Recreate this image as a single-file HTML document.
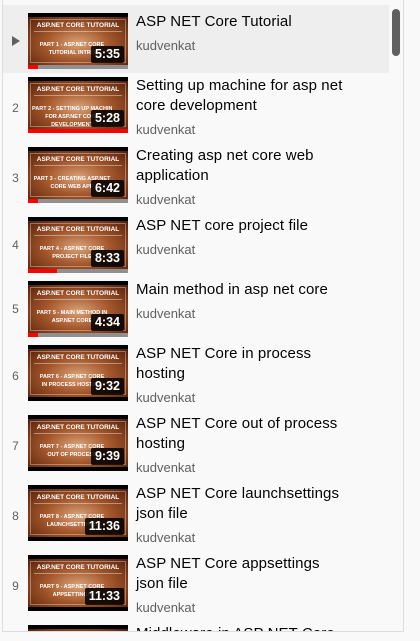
<!DOCTYPE html>
<html><head><meta charset="utf-8"><style>
*{margin:0;padding:0;box-sizing:border-box}
html,body{width:420px;height:641px;background:#f9f9f9;overflow:hidden;font-family:"Liberation Sans",Arial,sans-serif}
.box{position:absolute;left:2px;top:-2px;width:402px;height:634px;border:1px solid #ddd;border-top:none;overflow:hidden;background:#f9f9f9}
.list{position:absolute;left:0;top:7px;width:386px}
.row{display:flex;padding:4px 0 4px 0;position:relative;align-items:flex-start}
.row.first{background:#eee;padding-top:8px}
.idx{width:25px;text-align:center;font-size:12px;color:#606060;align-self:center}
.thumb{width:100px;height:56px;background:#000;position:relative;flex:none}
.img{position:absolute;left:0;top:4px;width:100px;height:48px;background:radial-gradient(ellipse at 50% 55%,#d9a27a 0%,#a5582c 45%,#6b2e12 85%,#4a1d0a 100%);overflow:hidden}
.img:after{content:"";position:absolute;left:2px;top:2px;right:2px;bottom:2px;border:1px solid rgba(255,255,255,.35)}
.t1{position:absolute;left:0;right:0;top:5px;text-align:center;color:#fff;font-size:6.5px;font-weight:bold;white-space:nowrap}
.t0{position:absolute;left:6px;right:6px;top:14px;height:1px;background:rgba(255,255,255,.4)}
.t2{position:absolute;left:4px;top:24px;color:#fff;font-size:5.5px;font-weight:bold;line-height:8px;text-align:center;width:80px;white-space:nowrap;overflow:hidden}
.dur{position:absolute;right:4px;bottom:6px;background:rgba(0,0,0,.85);color:#fff;font-size:12.5px;font-weight:bold;padding:1px 4px;border-radius:2px;line-height:15px}
.prog{position:absolute;left:0;bottom:0;width:100px;height:4px;background:#909090}
.prog i{display:block;height:4px;background:#f00}
.txt{margin-left:8px;margin-top:-1px;width:228px}
.title{font-size:15px;line-height:20px;color:#030303;letter-spacing:.1px}
.ch{font-size:13px;line-height:18px;color:#606060;margin-top:5px}
.sb{position:absolute;left:389px;top:11px;width:8px;height:47px;background:#606060;border-radius:4px}
.play{width:0;height:0;border-left:8px solid #606060;border-top:5px solid transparent;border-bottom:5px solid transparent;margin-left:9px}
</style></head><body>
<div class="box"><div class="list">
<div class="row first"><div class="idx"><div class="play"></div></div><div class="thumb"><div class="img"><div class="t1">ASP.NET CORE TUTORIAL</div><div class="t0"></div><div class="t2">PART 1 - ASP.NET CORE<br>TUTORIAL INTRO</div></div><div class="dur">5:35</div><div class="prog"><i style="width:10px"></i></div></div><div class="txt"><div class="title">ASP NET Core Tutorial</div><div class="ch">kudvenkat</div></div></div>
<div class="row"><div class="idx">2</div><div class="thumb"><div class="img"><div class="t1">ASP.NET CORE TUTORIAL</div><div class="t0"></div><div class="t2">PART 2 - SETTING UP MACHINE<br>FOR ASP.NET CORE<br>DEVELOPMENT</div></div><div class="dur">5:28</div><div class="prog"><i style="width:100px"></i></div></div><div class="txt"><div class="title">Setting up machine for asp net core development</div><div class="ch">kudvenkat</div></div></div>
<div class="row"><div class="idx">3</div><div class="thumb"><div class="img"><div class="t1">ASP.NET CORE TUTORIAL</div><div class="t0"></div><div class="t2">PART 3 - CREATING ASP.NET<br>CORE WEB APP</div></div><div class="dur">6:42</div><div class="prog"><i style="width:10px"></i></div></div><div class="txt"><div class="title">Creating asp net core web application</div><div class="ch">kudvenkat</div></div></div>
<div class="row"><div class="idx">4</div><div class="thumb"><div class="img"><div class="t1">ASP.NET CORE TUTORIAL</div><div class="t0"></div><div class="t2">PART 4 - ASP.NET CORE<br>PROJECT FILE</div></div><div class="dur">8:33</div><div class="prog"><i style="width:29px"></i></div></div><div class="txt"><div class="title">ASP NET core project file</div><div class="ch">kudvenkat</div></div></div>
<div class="row"><div class="idx">5</div><div class="thumb"><div class="img"><div class="t1">ASP.NET CORE TUTORIAL</div><div class="t0"></div><div class="t2">PART 5 - MAIN METHOD IN<br>ASP.NET CORE</div></div><div class="dur">4:34</div><div class="prog"><i style="width:10px"></i></div></div><div class="txt"><div class="title">Main method in asp net core</div><div class="ch">kudvenkat</div></div></div>
<div class="row"><div class="idx">6</div><div class="thumb"><div class="img"><div class="t1">ASP.NET CORE TUTORIAL</div><div class="t0"></div><div class="t2">PART 6 - ASP.NET CORE<br>IN PROCESS HOSTING</div></div><div class="dur">9:32</div></div><div class="txt"><div class="title">ASP NET Core in process hosting</div><div class="ch">kudvenkat</div></div></div>
<div class="row"><div class="idx">7</div><div class="thumb"><div class="img"><div class="t1">ASP.NET CORE TUTORIAL</div><div class="t0"></div><div class="t2">PART 7 - ASP.NET CORE<br>OUT OF PROCESS</div></div><div class="dur">9:39</div></div><div class="txt"><div class="title">ASP NET Core out of process hosting</div><div class="ch">kudvenkat</div></div></div>
<div class="row"><div class="idx">8</div><div class="thumb"><div class="img"><div class="t1">ASP.NET CORE TUTORIAL</div><div class="t0"></div><div class="t2">PART 8 - ASP.NET CORE<br>LAUNCHSETTINGS</div></div><div class="dur">11:36</div></div><div class="txt"><div class="title">ASP NET Core launchsettings json file</div><div class="ch">kudvenkat</div></div></div>
<div class="row"><div class="idx">9</div><div class="thumb"><div class="img"><div class="t1">ASP.NET CORE TUTORIAL</div><div class="t0"></div><div class="t2">PART 9 - ASP.NET CORE<br>APPSETTINGS</div></div><div class="dur">11:33</div></div><div class="txt"><div class="title" style="white-space:nowrap">ASP NET Core appsettings<br>json file</div><div class="ch">kudvenkat</div></div></div>
<div class="row"><div class="idx">10</div><div class="thumb"><div class="img"></div></div><div class="txt"><div class="title">Middleware in ASP NET Core</div><div class="ch">kudvenkat</div></div></div>
</div><div class="sb"></div></div>
</body></html>
